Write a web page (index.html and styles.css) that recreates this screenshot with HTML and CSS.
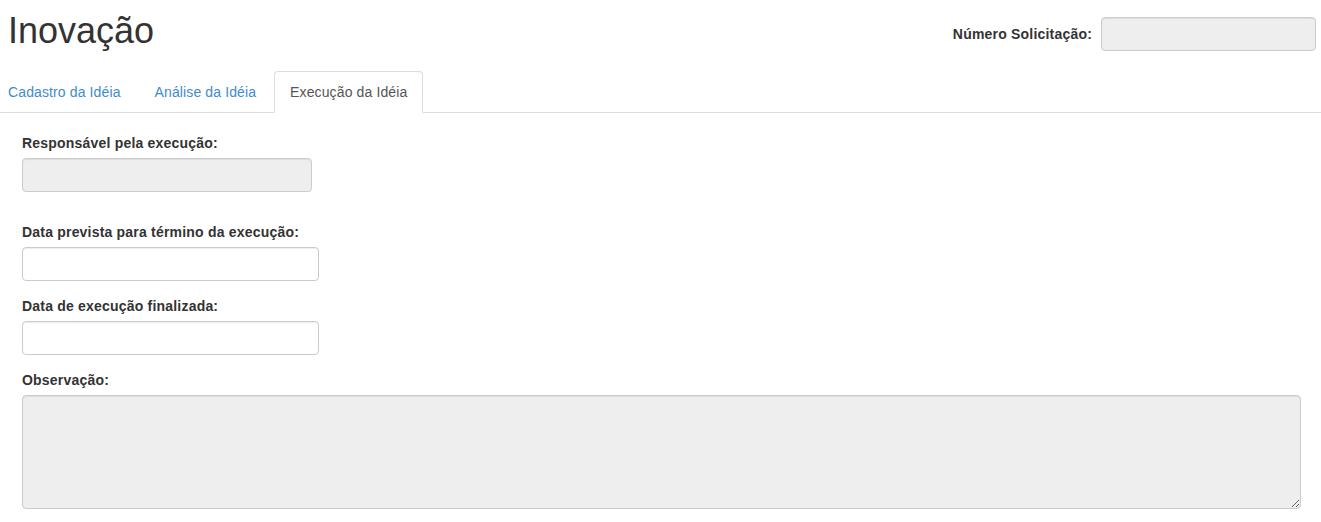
FILE: index.html
```html
<!DOCTYPE html>
<html lang="pt-BR">
<head>
<meta charset="utf-8">
<title>Inovação</title>
<link rel="stylesheet" href="styles.css">
</head>
<body>
<header class="page-header">
  <h1 class="page-title">Inovação</h1>
  <div class="numero">
    <label class="numero-label">Número Solicitação:</label>
    <input class="field field-numero" type="text" disabled>
  </div>
</header>
<ul class="tabs">
  <li class="tab"><a class="tab-link" href="#">Cadastro da Idéia</a></li>
  <li class="tab"><a class="tab-link" href="#">Análise da Idéia</a></li>
  <li class="tab tab-active"><a class="tab-link" href="#">Execução da Idéia</a></li>
</ul>
<main class="content">
  <div class="form-group group-first">
    <label class="form-label">Responsável pela execução:</label>
    <input class="field field-resp" type="text" disabled>
  </div>
  <div class="form-group">
    <label class="form-label">Data prevista para término da execução:</label>
    <input class="field field-date" type="text">
  </div>
  <div class="form-group">
    <label class="form-label">Data de execução finalizada:</label>
    <input class="field field-date" type="text">
  </div>
  <div class="form-group">
    <label class="form-label">Observação:</label>
    <textarea class="field field-obs" disabled></textarea>
  </div>
</main>
</body>
</html>
```
FILE: styles.css
```css
* { box-sizing: border-box; }
html, body {
  margin: 0;
  padding: 0;
  background: #fff;
  overflow: hidden;
}
body {
  font-family: "Liberation Sans", Arial, sans-serif;
  font-size: 14px;
  line-height: 20px;
  color: #333;
}
.page-header {
  display: flex;
  justify-content: space-between;
  align-items: flex-start;
  height: 71px;
  padding: 0 5px 0 8px;
}
.page-title {
  margin: 0;
  padding-top: 11px;
  font-size: 36px;
  line-height: 40px;
  font-weight: 400;
  color: #333;
}
.numero {
  display: flex;
  align-items: center;
  gap: 9px;
  padding-top: 17px;
}
.numero-label, .form-label {
  font-weight: 700;
  font-size: 14px;
  letter-spacing: 0.2px;
  color: #333;
}
.field {
  display: block;
  height: 34px;
  padding: 6px 12px;
  border: 1px solid #ccc;
  border-radius: 4px;
  background: #fff;
  font: inherit;
  color: #555;
  box-shadow: inset 0 1px 1px rgba(0,0,0,.075);
}
.field:disabled { background: #eee; }
.field-numero { width: 215px; }
.tabs {
  display: flex;
  list-style: none;
  margin: 0 0 0 -8px;
  padding: 0;
  border-bottom: 1px solid #ddd;
}
.tab {
  margin-bottom: -1px;
  margin-right: 2px;
}
.tab-link {
  display: block;
  padding: 10px 15px;
  line-height: 20px;
  letter-spacing: 0.12px;
  border: 1px solid transparent;
  border-radius: 4px 4px 0 0;
  color: #428bca;
  text-decoration: none;
}
.tab-active .tab-link {
  color: #555;
  background: #fff;
  border-color: #ddd #ddd transparent;
}
.content {
  padding: 20px 22px 0;
}
.form-group {
  margin-bottom: 15px;
}
.group-first { margin-bottom: 30px; }
.form-label {
  display: block;
  line-height: 20px;
  margin-bottom: 5px;
}
.field-resp { width: 290px; }
.field-date { width: 297px; }
.field-obs {
  width: 1279px;
  height: 114px;
  resize: vertical;
}
```
